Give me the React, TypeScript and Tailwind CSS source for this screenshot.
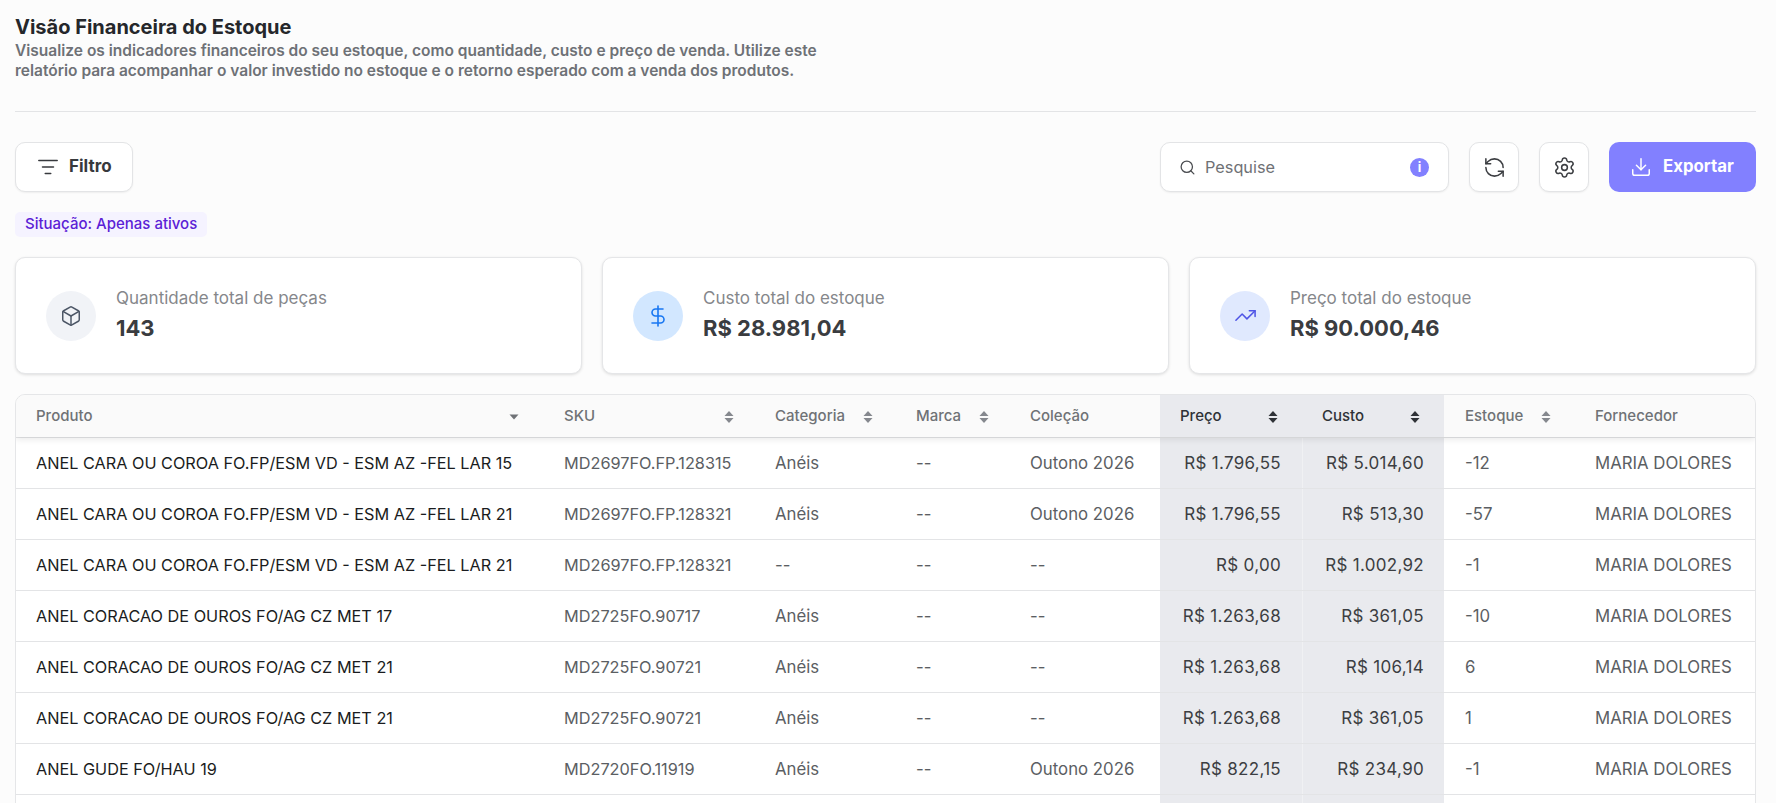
import React from "react";
import { ListFilter, Search, RefreshCcw, Settings, Download, Box, DollarSign, TrendingUp } from "lucide-react";

const cols = "grid grid-cols-[527px_211px_142px_114px_150px_142px_142px_130px_1fr]";

function Sort({ dark, only }: { dark?: boolean; only?: "down" }) {
  const c = dark ? "#2f3237" : "#85888e";
  if (only === "down") {
    return (
      <svg width="10" height="6" viewBox="0 0 10 6" className="shrink-0">
        <path d="M0.5 0.5 H9.5 L5 5.5 Z" fill="#6f7276" />
      </svg>
    );
  }
  return (
    <svg width="10" height="14" viewBox="0 0 10 14" className="shrink-0">
      <path d="M5 1 L9.5 6 H0.5 Z" fill={c} />
      <path d="M0.5 8 H9.5 L5 13 Z" fill={c} />
    </svg>
  );
}

const rows = [
  ["ANEL CARA OU COROA FO.FP/ESM VD - ESM AZ -FEL LAR 15", "MD2697FO.FP.128315", "Anéis", "--", "Outono 2026", "R$ 1.796,55", "R$ 5.014,60", "-12"],
  ["ANEL CARA OU COROA FO.FP/ESM VD - ESM AZ -FEL LAR 21", "MD2697FO.FP.128321", "Anéis", "--", "Outono 2026", "R$ 1.796,55", "R$ 513,30", "-57"],
  ["ANEL CARA OU COROA FO.FP/ESM VD - ESM AZ -FEL LAR 21", "MD2697FO.FP.128321", "--", "--", "--", "R$ 0,00", "R$ 1.002,92", "-1"],
  ["ANEL CORACAO DE OUROS FO/AG CZ MET 17", "MD2725FO.90717", "Anéis", "--", "--", "R$ 1.263,68", "R$ 361,05", "-10"],
  ["ANEL CORACAO DE OUROS FO/AG CZ MET 21", "MD2725FO.90721", "Anéis", "--", "--", "R$ 1.263,68", "R$ 106,14", "6"],
  ["ANEL CORACAO DE OUROS FO/AG CZ MET 21", "MD2725FO.90721", "Anéis", "--", "--", "R$ 1.263,68", "R$ 361,05", "1"],
  ["ANEL GUDE FO/HAU 19", "MD2720FO.11919", "Anéis", "--", "Outono 2026", "R$ 822,15", "R$ 234,90", "-1"],
];

function Card({ icon, bg, label, value }: { icon: React.ReactNode; bg: string; label: string; value: string }) {
  return (
    <div className="flex items-center h-[117px] bg-white border border-[#e5e6e8] rounded-[10px] shadow-[0_1px_3px_rgba(0,0,0,0.12)] pl-[30px]">
      <div className={`w-[50px] h-[50px] rounded-full flex items-center justify-center ${bg}`}>{icon}</div>
      <div className="ml-[20px] -mt-[3px]">
        <div className="text-[17px] leading-[22px] text-[#85878b]">{label}</div>
        <div className="text-[22px] leading-[26px] font-bold text-[#3a3c40] mt-[6px]">{value}</div>
      </div>
    </div>
  );
}

function Head({ label, dark, sort, justify, pad }: { label: string; dark?: boolean; sort?: boolean; justify?: boolean; pad: string }) {
  return (
    <div className={`flex items-center h-full pt-[1px] ${pad} ${justify ? "justify-between" : "gap-[18px]"} ${dark ? "bg-[#e9eaee] text-[#2f3237] font-medium" : "text-[#6f7276] font-medium"}`}>
      <span>{label}</span>
      {sort && <Sort dark={dark} />}
    </div>
  );
}

export default function App() {
  return (
    <div className="h-[803px] overflow-hidden bg-[#fcfcfc] px-[15px] pt-[15px] font-['Inter',sans-serif]">
      <h1 className="text-[20px] leading-[24px] font-bold text-[#25272b]">Visão Financeira do Estoque</h1>
      <p className="w-[835px] text-[15.5px] leading-[20px] font-semibold text-[#6e7176] mt-[2px]">
        Visualize os indicadores financeiros do seu estoque, como quantidade, custo e preço de venda. Utilize este relatório para acompanhar o valor investido no estoque e o retorno esperado com a venda dos produtos.
      </p>
      <div className="h-px bg-[#e3e4e6] mt-[30px] mr-[5px]" />

      <div className="flex items-center mt-[30px] mr-[5px]">
        <button className="flex items-center h-[50px] w-[118px] pl-[21px] bg-white border border-[#e3e4e6] rounded-[10px] shadow-[0_1px_2px_rgba(0,0,0,0.06)] text-[17px] font-bold text-[#37393d]">
          <ListFilter size={22} strokeWidth={1.7} className="text-[#37393d]" />
          <span className="ml-[10px]">Filtro</span>
        </button>
        <div className="ml-auto flex items-center w-[289px] h-[50px] pl-[18px] pr-[19px] bg-white border border-[#e3e4e6] rounded-[10px] shadow-[0_1px_2px_rgba(0,0,0,0.06)]">
          <Search size={17} strokeWidth={1.8} className="text-[#4a4c50]" />
          <span className="ml-[9px] text-[16.3px] text-[#6f7175]">Pesquise</span>
          <span className="ml-auto w-[19px] h-[19px] rounded-full bg-[#8280ff] flex items-center justify-center">
            <span className="text-white text-[13px] leading-none font-bold">i</span>
          </span>
        </div>
        <button className="ml-[20px] w-[50px] h-[50px] flex items-center justify-center bg-white border border-[#e3e4e6] rounded-[10px] shadow-[0_1px_2px_rgba(0,0,0,0.06)]">
          <RefreshCcw size={23} strokeWidth={1.6} className="text-[#3c3e42]" />
        </button>
        <button className="ml-[20px] w-[50px] h-[50px] flex items-center justify-center bg-white border border-[#e3e4e6] rounded-[10px] shadow-[0_1px_2px_rgba(0,0,0,0.06)]">
          <Settings size={23} strokeWidth={1.6} className="text-[#3c3e42]" />
        </button>
        <button className="ml-[20px] w-[147px] h-[50px] flex items-center pl-[21px] bg-[#8280ff] rounded-[10px] text-white text-[16.8px] font-bold">
          <Download size={22} strokeWidth={1.6} />
          <span className="ml-[11px]">Exportar</span>
        </button>
      </div>

      <div className="mt-[20px] flex w-fit items-center h-[25px] px-[10px] rounded-[5px] bg-[#f5f3ff] text-[15px] font-medium text-[#5b21d6]">Situação: Apenas ativos</div>

      <div className="grid grid-cols-3 gap-[20px] mt-[20px] mr-[5px]">
        <Card bg="bg-[#f1f3f7]" label="Quantidade total de peças" value="143" icon={<Box size={22} strokeWidth={1.6} className="text-[#4b5565]" />} />
        <Card bg="bg-[#d2e7ff]" label="Custo total do estoque" value="R$ 28.981,04" icon={<DollarSign size={24} strokeWidth={1.6} className="text-[#1877f2]" />} />
        <Card bg="bg-[#e0e9fe]" label="Preço total do estoque" value="R$ 90.000,46" icon={<TrendingUp size={23} strokeWidth={1.6} className="text-[#4f55e6]" />} />
      </div>

      <div className="mt-[20px] mr-[5px] bg-white border border-[#e5e6e8] rounded-t-[10px] overflow-hidden text-[16.8px]">
        <div className={`${cols} h-[42px] bg-[#fafafa] text-[15px] shadow-[0_3px_6px_rgba(0,0,0,0.08)] relative`}>
          <div className="flex items-center justify-between pt-[1px] pl-[20px] pr-[24px] font-medium text-[#6f7276]">
            <span>Produto</span>
            <Sort only="down" />
          </div>
          <Head label="SKU" sort justify pad="pl-[21px] pr-[20px]" />
          <Head label="Categoria" sort pad="pl-[21px]" />
          <Head label="Marca" sort pad="pl-[20px]" />
          <Head label="Coleção" pad="pl-[20px]" />
          <Head label="Preço" sort justify dark pad="pl-[20px] pr-[24px]" />
          <Head label="Custo" sort justify dark pad="pl-[20px] pr-[24px]" />
          <Head label="Estoque" sort pad="pl-[21px]" />
          <Head label="Fornecedor" pad="pl-[21px]" />
        </div>
        {rows.map((r, i) => (
          <div key={i} className={`${cols} h-[51px] leading-[19px] text-[#5b5e63] border-t border-[#e3e4e6] first:border-t-0`}>
            <div className="flex items-center pl-[20px] text-[16.25px] font-normal text-[#1a1c20] whitespace-nowrap">{r[0]}</div>
            <div className="flex items-center pl-[21px] text-[16.3px]">{r[1]}</div>
            <div className="flex items-center pl-[21px]">{r[2]}</div>
            <div className="flex items-center pl-[20px]">{r[3]}</div>
            <div className="flex items-center pl-[20px] whitespace-nowrap">{r[4]}</div>
            <div className="flex items-center justify-end pr-[21px] bg-[#e9eaee] text-[#3c3e42] text-[17px] tracking-[0.3px]">{r[5]}</div>
            <div className="flex items-center justify-end pr-[20px] bg-[#e9eaee] text-[#3c3e42] text-[17px] tracking-[0.3px] border-l border-[#f0f1f3]">{r[6]}</div>
            <div className="flex items-center pl-[21px]">{r[7]}</div>
            <div className="flex items-center pl-[21px] whitespace-nowrap">MARIA DOLORES</div>
          </div>
        ))}
        <div className={`${cols} h-[20px] border-t border-[#e3e4e6]`}>
          <div /><div /><div /><div /><div />
          <div className="bg-[#e9eaee]" />
          <div className="bg-[#e9eaee] border-l border-[#f0f1f3]" />
        </div>
      </div>
    </div>
  );
}
